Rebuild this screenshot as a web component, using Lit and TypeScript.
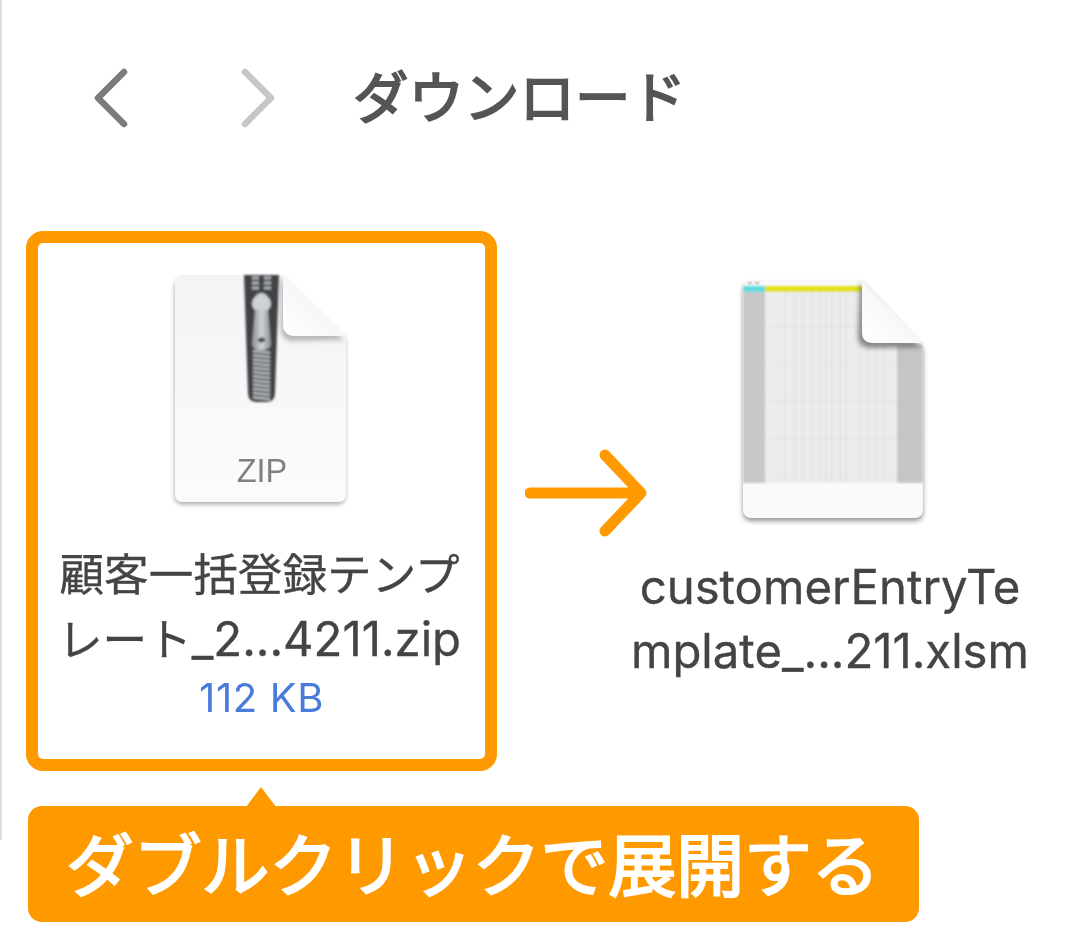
import { LitElement, html, css, svg } from "lit";
import { customElement } from "lit/decorators.js";

const FONT = css`"Noto Sans CJK JP", "Noto Sans", sans-serif`;

const zipRows = Array.from({ length: 12 }, (_, i) => 351 + i * 4.2);
const gridX = [785, 795, 803, 812, 820, 826, 832, 840, 846, 860, 868, 876, 884];
const gridY = [325, 362, 400, 437, 474];

@customElement("app-root")
export class AppRoot extends LitElement {
  static styles = css`
    :host { display: block; position: relative; width: 1080px; height: 950px; background: #fff; font-family: ${FONT}; overflow: hidden; }
    .window { box-sizing: border-box; height: 840px; border-left: 2px solid #dcdcdc; padding: 0 0 0 24px; }
    .toolbar { display: flex; align-items: center; height: 195px; padding-left: 66px; }
    .nav { display: block; flex: none; }
    .title { margin: 0 0 6px 76px; font-size: 55.5px; font-weight: 400; -webkit-text-stroke: 1.9px #555; line-height: 1; color: #555; white-space: nowrap; filter: blur(.6px); }
    .files { display: flex; align-items: flex-start; margin-top: 36px; }
    .selected { box-sizing: border-box; width: 471px; height: 540px; border: 12px solid #ff9900; border-radius: 17px; display: flex; flex-direction: column; align-items: center; padding-top: 22px; flex: none; }
    .label { font-family: Inter, "Noto Sans CJK JP", sans-serif; font-size: 44.6px; line-height: 64px; height: 64px; color: #444; -webkit-text-stroke: .35px #444; white-space: nowrap; text-align: center; filter: blur(.5px); }
    .lat { font-size: 47.300px; }
    .labels { margin: 28px 0 0 -4px; }
    .size { font-family: Inter, sans-serif; font-size: 40px; letter-spacing: .6px; line-height: 50px; margin-top: 2px; color: #4a7bd8; filter: blur(.4px); }
    .to { flex: none; margin: 218px 0 0 28px; display: block; }
    .result { display: flex; flex-direction: column; align-items: center; margin-left: -29px; padding-top: 44px; width: 420px; flex: none; }
    .result .icon { margin-left: 6px; }
    .result .labels { margin: 30px 0 0; }
    .callout { position: absolute; left: 28px; top: 806px; box-sizing: border-box; width: 891px; height: 116px; padding-left: 38px; background: #ff9900; border-radius: 14px; color: #fff; font-size: 67.8px; font-weight: 400; -webkit-text-stroke: 2.2px #fff; line-height: 112px; white-space: nowrap; }
    .callout::before { content: ""; position: absolute; left: 218px; top: -19px; width: 30px; height: 20px; background: #ff9900; clip-path: polygon(50% 0, 100% 100%, 0 100%); }
    .fwd { margin-left: 109px; }
    .icon { display: block; }
    .icon-label { font-family: "Liberation Sans", sans-serif; }
  `;

  private zipIcon() {
    return html`<svg class="icon" width="200" height="250" viewBox="162 265 200 250">
      <defs>
        <filter id="s1" x="-20%" y="-20%" width="140%" height="140%"><feGaussianBlur stdDeviation="2.500" /></filter>
        <filter id="s2" x="-20%" y="-20%" width="140%" height="140%"><feGaussianBlur stdDeviation="1" /></filter>
        <filter id="s3" x="-20%" y="-20%" width="140%" height="140%"><feGaussianBlur stdDeviation=".6" /></filter>
        <linearGradient id="z" x1="0" y1="0" x2="0" y2="1"><stop offset="0" stop-color="#f4f4f4" /><stop offset="1" stop-color="#fbfbfb" /></linearGradient>
        <linearGradient id="f" x1="0" y1="1" x2="1" y2="0"><stop offset="0" stop-color="#fff" /><stop offset=".55" stop-color="#f6f6f6" /><stop offset="1" stop-color="#d8d8d8" /></linearGradient>
        <linearGradient id="p" x1="0" y1="0" x2="1" y2="0"><stop offset="0" stop-color="#8a8f94" /><stop offset=".5" stop-color="#d2d4d6" /><stop offset="1" stop-color="#8a8f94" /></linearGradient>
      </defs>
      <path d="M181 277H283L345 337V494a7 7 0 0 1-7 7H182a7 7 0 0 1-7-7V283a7 7 0 0 1 6-6Z" fill="#777" filter="url(#s1)" transform="translate(0 3)" opacity=".7" />
      <path d="M181 275H283L346 337V495a7 7 0 0 1-7 7H182a7 7 0 0 1-7-7V281a6 6 0 0 1 6-6Z" fill="url(#z)" />
      <g filter="url(#s2)">
        <path d="M244 275H279L275 393q0 9-9 9h-9q-9 0-9-9Z" fill="#3f4347" />
        ${[278, 283, 288].map((y) => svg`<path d="M252 ${y}h7M264 ${y}h7" stroke="#aeb2b5" stroke-width="2.800" />`)}
        ${zipRows.map((y) => svg`<path d="M253 ${y}l17 1.800" stroke="#b9bcbf" stroke-width="2.500" />`)}
        <rect x="255" y="293" width="13" height="26" rx="6" fill="#c4c6c8" />
        <rect x="252" y="295" width="19" height="17" rx="8.500" fill="#cfd1d3" />
        <path d="M255 310h13l3 34q0 6-9.500 6t-9.500-6Z" fill="url(#p)" />
        <path d="M257 340l5-3 4 3-5 3Z" fill="#3f4347" />
      </g>
      <path d="M283 275l63 62-50 1q-13 0-13-13Z" fill="#777" filter="url(#s1)" opacity=".5" transform="translate(-2 3)" />
      <path d="M283 275L346 336H295q-12 0-12-12Z" fill="url(#f)" />
      <text class="icon-label" x="262" y="482" text-anchor="middle" font-size="32.500" fill="#808080" filter="url(#s3)">ZIP</text>
    </svg>`;
  }

  private sheetIcon() {
    return html`<svg class="icon" width="200" height="250" viewBox="733 274 200 250">
      <defs>
        <filter id="t1" x="-20%" y="-20%" width="140%" height="140%"><feGaussianBlur stdDeviation="2.500" /></filter>
        <filter id="t2" x="-5%" y="-5%" width="110%" height="110%"><feGaussianBlur stdDeviation="1" /></filter>
        <clipPath id="pg"><path d="M749 280H862L923 345V509a8 8 0 0 1-8 8H751a8 8 0 0 1-8-8V286a6 6 0 0 1 6-6Z" /></clipPath>
        <linearGradient id="g" x1="0" y1="1" x2="1" y2="0"><stop offset="0" stop-color="#fff" /><stop offset=".55" stop-color="#f6f6f6" /><stop offset="1" stop-color="#d4d4d4" /></linearGradient>
      </defs>
      <path d="M749 280H862L923 345V509a8 8 0 0 1-8 8H751a8 8 0 0 1-8-8V286a6 6 0 0 1 6-6Z" fill="#666" filter="url(#t1)" transform="translate(0 3)" opacity=".7" />
      <g clip-path="url(#pg)">
        <rect x="743" y="280" width="180" height="237" fill="#fafafa" />
        <g filter="url(#t2)">
          <rect x="743" y="291" width="154" height="191" fill="#ececec" />
          <rect x="743" y="291" width="22" height="191" fill="#c8c8c8" />
          <rect x="897" y="343" width="26" height="139" fill="#c6c6c6" />
          <rect x="743" y="285" width="22" height="6" fill="#5fdde2" />
          <rect x="765" y="285" width="97" height="6" fill="#e2e21c" />
          <rect x="748" y="281" width="4" height="2" fill="#aaa" />
          <rect x="755" y="281" width="4" height="2" fill="#aaa" />
          ${gridX.map((x) => svg`<line x1=${x} x2=${x} y1="291" y2="482" stroke="#dcdce0" stroke-width="1" />`)}
          ${gridY.map((y) => svg`<line x1="743" x2="923" y1=${y} y2=${y} stroke="#b7b7b7" stroke-opacity=".2" stroke-width="1" />`)}
        </g>
      </g>
      <path d="M862 280l61 64-50 1q-13 0-13-13Z" fill="#444" filter="url(#t1)" opacity=".6" transform="translate(-2 2)" />
      <path d="M862 280L923 342H873q-11 0-11-11Z" fill="url(#g)" />
    </svg>`;
  }

  render() {
    return html`
      <div class="window">
        <div class="toolbar">
          <svg class="nav" width="38" height="60" viewBox="0 0 38 60"><path d="M32 4 6 30 32 56" fill="none" stroke="#7b7b7b" stroke-width="6.500" stroke-linecap="round" stroke-linejoin="round" /></svg>
          <svg class="nav fwd" width="38" height="60" viewBox="0 0 38 60"><path d="M6 4 32 30 6 56" fill="none" stroke="#c6c6c6" stroke-width="6.500" stroke-linecap="round" stroke-linejoin="round" /></svg>
          <div class="title">ダウンロード</div>
        </div>
        <div class="files">
          <div class="selected">
            ${this.zipIcon()}
            <div class="labels">
              <div class="label">顧客一括登録テンプ</div>
              <div class="label">レート<span class="lat">_2...4211.zip</span></div>
            </div>
            <div class="size">112 KB</div>
          </div>
          <svg class="to" width="124" height="88" viewBox="0 0 124 88"><path d="M5 44H114M80 6l36 38-36 38" fill="none" stroke="#ff9900" stroke-width="11" stroke-linecap="round" stroke-linejoin="round" /></svg>
          <div class="result">
            ${this.sheetIcon()}
            <div class="labels">
              <div class="label lat">customerEntryTe</div>
              <div class="label lat">mplate_...211.xlsm</div>
            </div>
          </div>
        </div>
      </div>
      <div class="callout">ダブルクリックで展開する</div>
    `;
  }
}
